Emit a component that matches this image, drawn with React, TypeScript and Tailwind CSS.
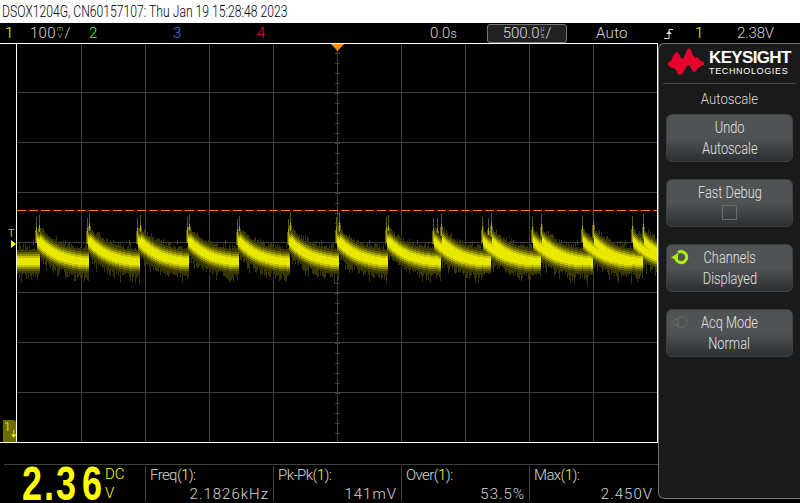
import React from "react";

const sans = "font-['Roboto',sans-serif] font-light";

// each burst holds the trigger spikes of one ripple period
const bursts = [
  [36, 39],
  [87, 89],
  [137, 140],
  [187, 189],
  [237, 239],
  [288, 290],
  [336, 339],
  [386, 388],
  [433, 441],
  [482, 491],
  [532, 541],
  [582, 593],
  [632, 643],
];
const extraSpikes: [number, number][] = [
  [437, 218],
  [488, 218],
];
const bands: [string, number][] = [
  ["#3b3b00", 11.5],
  ["#5e5e00", 9.5],
  ["#8e8e00", 7.5],
  ["#c4c400", 5.5],
  ["#e8e800", 3.5],
];

function rng(seed: number) {
  let s = seed;
  return () => {
    s = (s * 1664525 + 1013904223) % 4294967296;
    return s / 4294967296;
  };
}

function buildWave() {
  const rand = rng(42);
  const centre = new Map<number, number[]>();
  const add = (x: number, y: number) => {
    centre.set(x, [...(centre.get(x) ?? []), y]);
  };
  for (let x = 17; x < 40; x++) add(x, 261);
  bursts.forEach((b, i) => {
    b.forEach((start, j) => {
      const end = bursts[i + 1] ? bursts[i + 1][j] : 657;
      for (let x = start + 1; x < end; x++) {
        add(x, 264 - 24 * Math.exp(-(x - start) / 20));
      }
    });
  });

  const paths = bands.map(() => "");
  const noise: string[] = [];
  const spikes: string[] = [];
  const tips: string[] = [];
  for (let x = 17; x < 657; x++) {
    const ys = centre.get(x) ?? [];
    ys.forEach((c) => {
      bands.forEach(([, h], k) => {
        const top = Math.round(c - h);
        const height = Math.round(h * 2);
        paths[k] += `M${x} ${top}h1v${height}h-1z`;
      });
      const up = Math.round(c - 11 - rand() * rand() * 8);
      const down = Math.round(c + 11 + rand() * rand() * 13);
      noise.push(`M${x} ${up}h1v${down - up}h-1z`);
    });
  }
  const spikeAt = (x: number, tip: number) => {
    spikes.push(`M${x} ${tip}h1l1 26h-3z`);
    tips.push(`M${x} ${tip + 10}h1v16h-1z`);
  };
  bursts.forEach((b) => {
    spikeAt(b[0], 216 + Math.round(rand() * 3));
    spikeAt(b[1], 212 + Math.round(rand() * 4));
  });
  extraSpikes.forEach(([x, y]) => spikeAt(x, y));
  return { paths, noise: noise.join(""), spikes: spikes.join(""), tips: tips.join("") };
}

const wave = buildWave();

function Scope() {
  const xs = [81, 145, 209, 273, 337, 401, 465, 529, 593];
  const ys = [93, 143, 193, 243, 293, 343, 393];
  const hTicks = Array.from({ length: 40 }, (_, i) => 33 + i * 16);
  const vTicks = Array.from({ length: 40 }, (_, i) => 53 + i * 10);
  return (
    <svg width={640} height={398} viewBox="17 44 640 398" shapeRendering="crispEdges" className="block">
      <g stroke="#404040" strokeWidth={1}>
        {xs.map((x) => (
          <line key={x} x1={x + 0.5} x2={x + 0.5} y1={44} y2={442} />
        ))}
        {ys.map((y) => (
          <line key={y} x1={17} x2={657} y1={y - 0.5} y2={y - 0.5} />
        ))}
        {hTicks.map((x) => (
          <line key={x} x1={x + 0.5} x2={x + 0.5} y1={240} y2={245} />
        ))}
        {vTicks.map((y) => (
          <line key={y} x1={335} x2={340} y1={y + 0.5} y2={y + 0.5} />
        ))}
      </g>
      <path d={wave.noise} fill="#363600" />
      <path d={wave.spikes} fill="#5c5c00" />
      <path d={wave.tips} fill="#a8a800" />
      {bands.map(([color], i) => (
        <path key={color} d={wave.paths[i]} fill={color} />
      ))}
      <line x1={17} x2={657} y1={210.5} y2={210.5} stroke="#ff8000" strokeDasharray="9 3" />
      <polygon points="331,44 344,44 337.5,51" fill="#ff9010" shapeRendering="auto" />
    </svg>
  );
}

function Stacked({ top, bottom }: { top: string; bottom: string }) {
  return (
    <span className="inline-flex flex-col items-center text-[7px] leading-[7px] mx-px">
      <span>{top}</span>
      <span>{bottom}</span>
    </span>
  );
}

function TopBar() {
  return (
    <div className={`flex h-[20px] items-center bg-black text-[15px] text-[#d8d8d8] ${sans}`}>
      <span className="ml-[5px] w-[25px] text-[#ffff00]">1</span>
      <span className="flex w-[59px] items-center tracking-[0.3px]">
        100
        <Stacked top="m" bottom="V" />/
      </span>
      <span className="w-[84px] text-[#33ff33]">2</span>
      <span className="w-[84px] text-[#3a80ff]">3</span>
      <span className="w-[173px] text-[#f01038]">4</span>
      <span className="w-[57px]">
        0.0<span className="text-[13px]">s</span>
      </span>
      <span className="flex h-[19px] w-[80px] items-center justify-center rounded-[3px] border border-[#777] bg-[#222]">
        500.0
        <Stacked top="µ" bottom="s" />/
      </span>
      <span className="ml-[29px] w-[68px] tracking-[0.3px]">Auto</span>
      <svg width={10} height={12} viewBox="0 0 10 12" className="block">
        <path d="M0 11.5h5V2.5h4" fill="none" stroke="#e0e0e0" />
        <path d="M2 7l3-3 3 3z" fill="#e0e0e0" />
      </svg>
      <span className="ml-[21px] w-[42px] text-[#ffff00]">1</span>
      <span className="tracking-[-0.2px]">2.38V</span>
    </div>
  );
}

function Measure({ name, value }: { name: string; value: string }) {
  return (
    <div className={`mt-px flex w-[128px] flex-col border-l border-[#404040] pl-[4px] pr-[4px] text-[15px] leading-[17px] text-[#d8d8d8] ${sans}`}>
      <span className="mt-px tracking-[-0.6px]">
        {name}(<span className="text-[#ffff00]">1</span>):
      </span>
      <span className="mt-[2px] text-right tracking-[1px]">{value}</span>
    </div>
  );
}

function Readout() {
  const digit = "inline-block origin-left scale-x-75 text-[48px] leading-[37px] font-bold font-['Liberation_Sans',sans-serif] text-[#ffff00]";
  return (
    <div className="flex h-[37px] w-[141px] pl-[18px]">
      <span className={`${digit} w-[22px]`}>2</span>
      <span className={`${digit} w-[12px]`}>.</span>
      <span className={`${digit} w-[26px]`}>3</span>
      <span className={`${digit} w-[23px]`}>6</span>
      <div className={`flex flex-col text-[15px] leading-[18px] text-[#ffff00] ${sans}`}>
        <span>DC</span>
        <span className="mt-px">V</span>
      </div>
    </div>
  );
}

function Logo() {
  return (
    <div className="mx-[4px] flex h-[40px] items-center gap-[4px] border-b border-[#484848] pl-[5px] pb-[3px]">
      <svg width={37} height={29} viewBox="668 49 37 29" className="block">
        <polygon
          fill="#e8002c"
          points="668,63 671,62 673,57 675,54 677,53 679,55 681,59 683,60 685,56 687,51 689,49 691,51 693,56 695,59 697,58 699,60 701,62 704,63 704,66 701,67 698,69 696,72 694,73 692,71 690,67 688,66 686,68 684,72 682,75 680,76 678,75 676,71 674,69 672,69 670,68 668,66"
        />
      </svg>
      <div className="flex flex-col text-white font-['Liberation_Sans',sans-serif]">
        <span className="text-[17px] leading-[17px] font-bold tracking-[-0.65px]">KEYSIGHT</span>
        <span className="text-[9px] leading-[10px] tracking-[0.65px]">TECHNOLOGIES</span>
      </div>
    </div>
  );
}

function Cycle({ active }: { active?: boolean }) {
  const color = active ? "#b0f010" : "#686868";
  return (
    <svg width={18} height={16} viewBox="0 0 18 16" className="absolute left-[4px] top-[5px] block">
      <path d="M7 2.6A5.5 5.5 0 1 1 5 9" fill="none" stroke={color} strokeWidth={active ? 3 : 1} />
      <polygon points="0,7.5 7,3 7,11" fill={active ? color : "none"} stroke={color} strokeWidth={active ? 0 : 1} />
    </svg>
  );
}

function SoftKey({ lines, icon, box }: { lines: string[]; icon?: "on" | "off"; box?: boolean }) {
  return (
    <div className="relative mx-[7px] flex h-[48px] w-[127px] flex-col items-center rounded-[6px] border border-[#3c3f41] bg-linear-to-b from-[#505354] from-50% to-[#2d3033] pt-[2px] text-[16px] leading-[21px] text-[#e4e4e4]">
      {icon && <Cycle active={icon === "on"} />}
      {lines.map((line) => (
        <span key={line} className="inline-block scale-x-[.8] whitespace-nowrap">
          {line}
        </span>
      ))}
      {box && <span className="mt-[2px] h-[15px] w-[15px] border border-[#6a6a6a]" />}
    </div>
  );
}

function SidePanel() {
  return (
    <div className={`flex h-[456px] w-[142px] flex-col rounded-l-[6px] border-t border-b border-l border-[#707070] bg-[#1a1a1a] ${sans}`}>
      <Logo />
      <div className="mt-[5px] mb-[5px] scale-x-[.88] text-center text-[15px] leading-[20px] text-[#dcdcdc]">Autoscale</div>
      <div className="flex flex-col gap-[17px]">
        <SoftKey lines={["Undo", "Autoscale"]} />
        <SoftKey lines={["Fast Debug"]} box />
        <SoftKey lines={["Channels", "Displayed"]} icon="on" />
        <SoftKey lines={["Acq Mode", "Normal"]} icon="off" />
      </div>
    </div>
  );
}

export default function App() {
  return (
    <div className="h-[503px] w-[800px] overflow-hidden bg-black">
      <div className="flex h-[23px] items-center bg-white pl-[2px] font-['Roboto',sans-serif] text-[16px] font-light text-black">
        <span className="inline-block origin-left scale-x-[.76] whitespace-nowrap">DSOX1204G, CN60157107: Thu Jan 19 15:28:48 2023</span>
      </div>
      <TopBar />
      <div className="flex h-[460px]">
        <div className="flex w-[658px] flex-col">
          <div className="flex h-[400px] border-y border-white">
            <div className="relative w-[16px]">
              <span className={`absolute left-[8px] top-[184px] text-[11px] leading-[11px] text-[#ffff00] ${sans}`}>T</span>
              <span className="absolute left-[11px] top-[196px] h-0 w-0 border-y-[4px] border-l-[5px] border-y-transparent border-l-[#ffff00]" />
              <div className="absolute bottom-0 left-[3px] flex h-[22px] w-[13px] rounded-tr-[3px] bg-[#6c6c00] text-[12px] leading-[14px] text-[#ffff00]">
                <span className={`ml-[1px] ${sans}`}>1</span>
                <svg width={7} height={20} viewBox="0 0 7 20" className="block">
                  <path d="M3.5 10v7" stroke="#ffff00" fill="none" />
                  <path d="M0 16h7l-3.5 4z" fill="#ffff00" />
                </svg>
              </div>
            </div>
            <div className="w-[642px] border-x border-white">
              <Scope />
            </div>
          </div>
          <div className="ml-[4px] mt-[21px] flex h-[38px] border-t border-[#404040]">
            <Readout />
            <Measure name="Freq" value="2.1826kHz" />
            <Measure name="Pk-Pk" value="141mV" />
            <Measure name="Over" value="53.5%" />
            <Measure name="Max" value="2.450V" />
          </div>
        </div>
        <SidePanel />
      </div>
    </div>
  );
}
